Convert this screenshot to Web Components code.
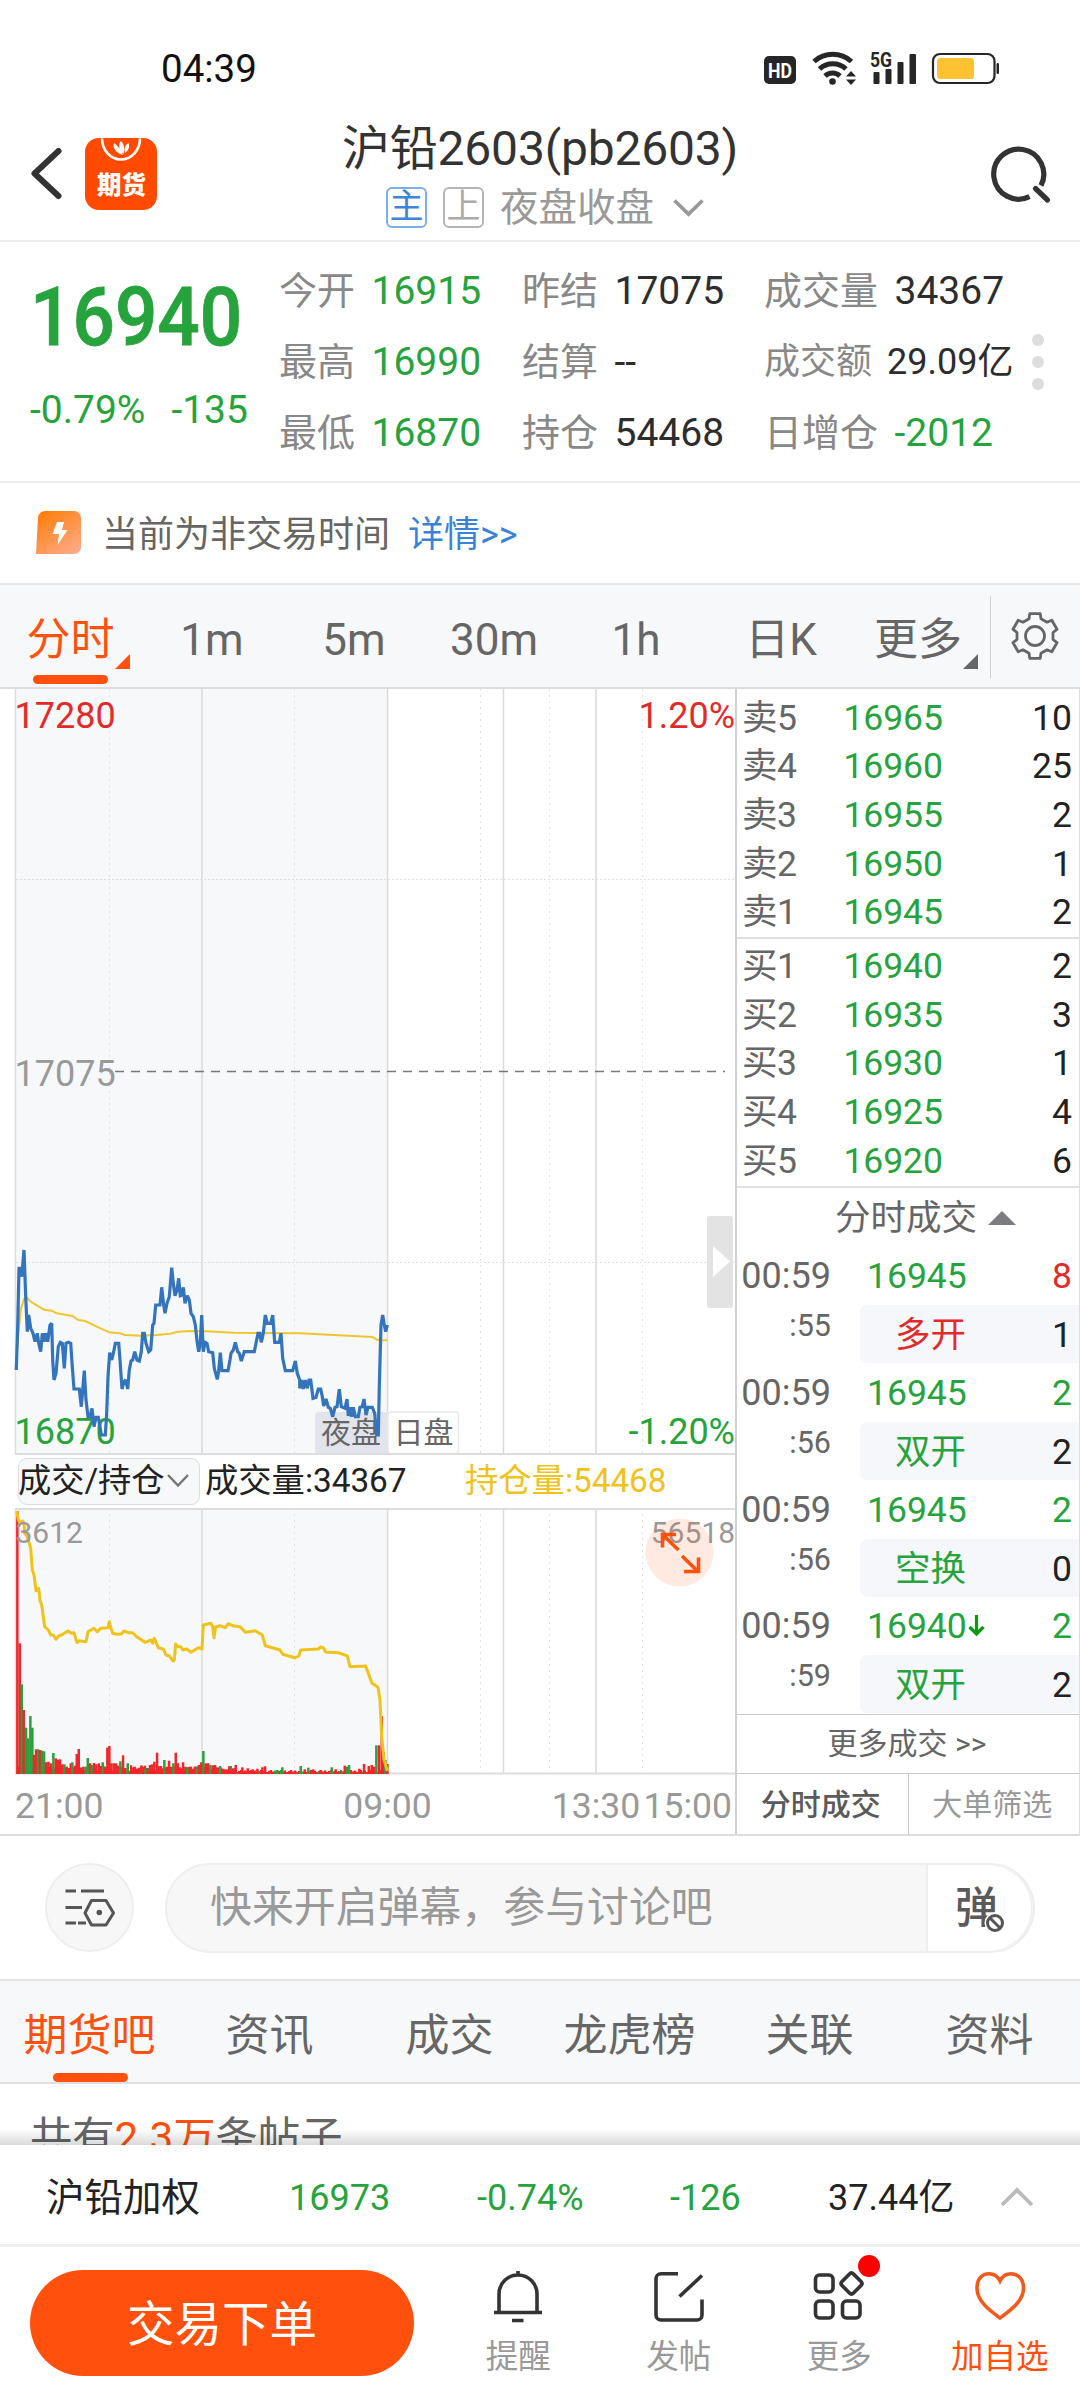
<!DOCTYPE html>
<html lang="zh-CN">
<head>
<meta charset="utf-8">
<title>沪铅2603</title>
<style>
html,body{margin:0;padding:0;background:#fff}
body{width:1080px;height:2400px;overflow:hidden;display:flex;flex-direction:column;
 font-family:Roboto,"Noto Sans CJK SC",sans-serif;color:#222;
 --green:#26a33c;--red:#e32a2a;--orange:#ff500d;--grey:#666;--line:#ddd;--panel:#f7f8fa}
</style>
</head>
<body>
<status-bar time="04:39"></status-bar>
<title-bar><span slot="title">沪铅2603(pb2603)</span><span slot="state">夜盘收盘</span></title-bar>
<quote-panel></quote-panel>
<trade-notice>当前为非交易时间<span slot="link">详情&gt;&gt;</span></trade-notice>
<period-tabs></period-tabs>
<market-view></market-view>
<danmu-bar>快来开启弹幕，参与讨论吧</danmu-bar>
<forum-tabs></forum-tabs>
<feed-head></feed-head>
<index-strip></index-strip>
<action-bar></action-bar>
<script>
const define = (name, html, after) => customElements.define(name, class extends HTMLElement {
  constructor() {
    super();
    const root = this.attachShadow({mode: 'open'});
    root.innerHTML = '<style>:host{display:block;box-sizing:border-box;flex:none}*{box-sizing:border-box}svg{display:block;flex:none}</style>' +
      (typeof html === 'function' ? html(this) : html);
    if (after) after(root, this);
  }
});

/* ---------- status bar ---------- */
define('status-bar', el => `
<style>
:host{height:108px;display:flex;padding:48px 0 0 161px;font-size:38.500px;line-height:42px;color:#111}
.t{flex:1}
svg{margin-top:-8px}
</style>
<span class="t">${el.getAttribute('time')}</span>
<svg width="330" height="60" viewBox="750 40 330 60" fill="#262626">
 <rect x="764" y="56" width="32" height="28" rx="5"/>
 <text x="780" y="77.500" font-size="21" font-weight="700" fill="#fff" text-anchor="middle" textLength="24" lengthAdjust="spacingAndGlyphs">HD</text>
 <g fill="none" stroke="#262626" stroke-width="5">
  <path d="M814 61.500a28 28 0 0 1 37.500 0"/>
  <path d="M819.500 69a19.500 19.500 0 0 1 26.500 0"/>
  <path d="M825 76a11 11 0 0 1 15 0"/>
 </g>
 <circle cx="832.500" cy="81.500" r="3.300"/>
 <path d="M851 71l5 5.600h-10zM851 85l5-5.600h-10z"/>
 <text x="870" y="67" font-size="20" font-weight="700" textLength="22" lengthAdjust="spacingAndGlyphs">5G</text>
 <rect x="873.500" y="72" width="6" height="12" rx="1"/>
 <rect x="885.500" y="69" width="6" height="15" rx="1"/>
 <rect x="897.500" y="62" width="6" height="22" rx="1"/>
 <rect x="909.500" y="54" width="6.500" height="30" rx="1"/>
 <rect x="933" y="54" width="61.500" height="29" rx="7" fill="none" stroke="#262626" stroke-width="2.200"/>
 <rect x="937" y="58" width="37" height="21" rx="3.500" fill="#ffc233"/>
 <rect x="996.500" y="63" width="2.500" height="11" rx="1.200"/>
</svg>`);

/* ---------- title bar ---------- */
define('title-bar', `
<style>
:host{height:134px;display:flex;align-items:center;border-bottom:2px solid #eee}
.l{width:250px;display:flex;align-items:center;padding-left:28px}
.mid{flex:1;display:flex;flex-direction:column;align-items:center;gap:10px}
.title{font-size:48px;line-height:56px;color:#333;letter-spacing:-.2px}
.sub{display:flex;align-items:center;height:41px;font-size:38.500px;line-height:41px;color:#999;padding-left:12px}
i{font-style:normal;width:41px;height:41px;border:2px solid #b5b5b5;border-radius:6px;font-size:34px;line-height:35px;text-align:center;color:#aaa;margin-right:16px}
i.b{border-color:#7caee8;color:#3d85d9}
.r{width:250px;display:flex;justify-content:flex-end;padding-right:27px}
</style>
<div class="l">
 <svg width="36" height="60" viewBox="28 144 36 60"><path d="M58.500 151L34.500 173.500L58.500 196" fill="none" stroke="#333" stroke-width="6" stroke-linecap="round" stroke-linejoin="round"/></svg>
 <svg width="93" height="72" viewBox="64 138 93 72"><rect x="85" y="138" width="72" height="72" rx="14" fill="#ff4a00"/>
  <path d="M102 138.500a19 21 0 0 0 38 0" fill="none" stroke="#fff" stroke-width="2.600"/>
  <path d="M123 155C116 153 112.500 148 114 143C118 146 121 150 123 155zM123.500 154C118.500 149 118 144.500 121 141C124.500 145 125 149 123.500 154zM125 153C124 148 125.500 144.500 128.500 143C130 147 128.500 150.500 125 153z" fill="#fff"/>
  <text x="121.500" y="194" font-size="25" font-weight="900" fill="#fff" text-anchor="middle" textLength="49" lengthAdjust="spacingAndGlyphs">期货</text></svg>
</div>
<div class="mid"><div class="title"><slot name="title"></slot></div>
 <div class="sub"><i class="b">主</i><i>上</i><slot name="state"></slot>
 <svg width="60" height="30" viewBox="0 0 60 30" style="margin-right:-8px"><path d="M20.500 8.500L34.500 22L48.500 8.500" fill="none" stroke="#999" stroke-width="3.800"/></svg></div></div>
<div class="r"><svg width="62" height="62" viewBox="990 143 62 62" fill="none" stroke="#333" stroke-width="5.200">
 <path d="M1028.500 196.700A25 25 0 1 1 1040 185.500"/><path d="M1034.500 188.500L1046.500 200" stroke-linecap="round"/></svg></div>`);

/* ---------- quote ---------- */
define('quote-panel', `
<style>
:host{height:241px;display:flex;border-bottom:2px solid #eee;font-size:39px}
.p{width:279px;padding:30px 0 0 30px;color:var(--green)}
.big{font-size:81px;line-height:92px;font-weight:500;width:226px;transform:scaleX(.922);transform-origin:0 50%;white-space:nowrap;-webkit-text-stroke:.8px currentColor}
.chg{display:flex;gap:26px;line-height:46px;margin-top:23px;white-space:nowrap}
.g{width:745px;display:grid;grid-template-columns:243px 242px 260px;grid-template-rows:repeat(3,71px);padding-top:13px}
.c{display:flex;align-items:center;line-height:46px;white-space:nowrap;color:#2d2d2d}
.c span{font-size:38px;color:#888;margin-right:16.500px}
.c.n{font-size:36px}.c.n span{font-size:36px;margin-right:15px}
em{font-style:normal;color:var(--green)}
.d{display:flex;flex-direction:column;gap:10px;padding:92px 0 0 8px}
.d b{width:12px;height:12px;border-radius:50%;background:#ddd}
</style>
<div class="p"><div class="big">16940</div><div class="chg"><span>-0.79%</span><span>-135</span></div></div>
<div class="g">
<div class="c"><span>今开</span><em>16915</em></div><div class="c"><span>昨结</span>17075</div><div class="c"><span>成交量</span>34367</div>
<div class="c"><span>最高</span><em>16990</em></div><div class="c"><span>结算</span>--</div><div class="c n"><span>成交额</span>29.09亿</div>
<div class="c"><span>最低</span><em>16870</em></div><div class="c"><span>持仓</span>54468</div><div class="c"><span>日增仓</span><em>-2012</em></div>
</div>
<div class="d"><b></b><b></b><b></b></div>`);

/* ---------- notice ---------- */
define('trade-notice', `
<style>
:host{height:100px;display:flex;align-items:center;font-size:36px;line-height:44px;color:#666;padding:4px 0 0 36px}
svg{margin:-5px 21px 0 0}
.a{color:#3a82d6;margin-left:18px}
</style>
<svg width="45" height="43" viewBox="0 0 45 43"><defs><linearGradient id="g" x1="0" y1="0" x2=".7" y2="1"><stop offset="0" stop-color="#ff7a00"/><stop offset="1" stop-color="#ffa880"/></linearGradient></defs>
<path d="M9 0H38a7 7 0 0 1 7 7V36a7 7 0 0 1-7 7H0L2 7a7 7 0 0 1 7-7z" fill="url(#g)"/><path d="M21 11h7l-2 8h5.500l-10 15 1.500-11h-6.500z" fill="#fff"/></svg>
<slot></slot><span class="a"><slot name="link"></slot></span>`);

/* ---------- period tabs ---------- */
define('period-tabs', `
<style>
:host{height:106px;display:flex;background:var(--panel);border-top:2px solid #eaeaea;border-bottom:2px solid #ddd;font-size:44px;line-height:50px;color:#666}
nav{width:990px;display:grid;grid-template-columns:141px 142px 142px 138px 146px 144px 1fr;height:102px}
nav>div{display:flex;align-items:center;justify-content:center;padding-top:7px;position:relative}
nav>div:last-child{justify-content:flex-start;padding-left:21px}
.on{color:var(--orange)}
.on:after{content:"";position:absolute;left:33px;top:90px;width:75px;height:9px;border-radius:5px;background:var(--orange)}
.on svg,.m svg{position:absolute;bottom:18px}
.s{flex:1;display:flex;align-items:center;justify-content:center;padding-right:2px}
.v{width:1px;height:82px;background:#d2d2d2;margin-top:11px}
</style>
<nav><div class="on">分时<svg style="right:11px" width="15" height="15"><path d="M15 0V15H0z" fill="#ff500d"/></svg></div>
<div>1m</div><div>5m</div><div>30m</div><div>1h</div><div>日K</div>
<div class="m">更多<svg style="right:12px" width="15" height="15"><path d="M15 0V15H0z" fill="#666"/></svg></div></nav><div class="v"></div>
<div class="s"><svg width="50" height="52" viewBox="-25 -26 50 52" fill="none" stroke="#666" stroke-width="2.800" stroke-linejoin="round">
<circle r="9.500"/><path id="gear"/></svg></div>`, root => {
  const pts = [];
  for (let k = 0; k < 6; k++) for (const [a, r] of [[-13, 23], [13, 23], [19, 18.3], [41, 18.3]]) {
    const t = (k * 60 - 90 + a) * Math.PI / 180;
    pts.push((r * Math.cos(t)).toFixed(1) + ' ' + (r * Math.sin(t)).toFixed(1));
  }
  root.getElementById('gear').setAttribute('d', 'M' + pts.join('L') + 'z');
});

/* ---------- chart ---------- */
const series = (text, ox, oy) => text.trim().split(/\s+/).map(p => {
  const [x, y] = p.split(',');
  return (ox + x / 3).toFixed(1) + ',' + (oy + y / 3).toFixed(1);
}).join(' ');
const price = series(`49,510 53,380 57,205 62,205 65,230 72,150 77,290 82,395 86,345 92,385 99,400 105,425 112,400 116,430 122,455 127,400 132,425 137,400 143,425 150,375 155,370 158,480 162,540 168,520 175,440 181,427 187,430 193,505 198,430 205,427 212,430 217,500 222,567 238,567 244,620 248,570 253,512 258,600 264,650 270,650 276,625 282,680 288,652 295,652 300,680 304,705 316,705 320,640 324,530 329,458 335,480 341,455 346,430 356,430 360,480 366,567 372,545 377,540 383,567 388,510 393,483 398,480 404,455 411,480 418,483 424,455 428,400 433,400 438,430 446,455 452,450 458,375 462,370 467,315 480,315 485,262 491,315 495,340 501,310 508,290 515,203 520,250 525,287 531,270 536,235 541,287 546,285 550,262 555,310 562,287 568,300 573,340 580,350 586,375 592,430 596,455 601,430 605,345 610,455 615,427 621,430 626,455 638,458 643,505 652,538 656,512 661,458 666,512 684,512 690,480 693,460 700,450 706,427 713,455 718,460 724,483 733,455 763,455 768,430 774,400 779,400 784,427 790,400 796,345 802,370 812,370 818,345 824,427 838,427 843,400 848,475 856,512 878,512 886,483 892,520 899,540 899,565 905,540 910,567 916,540 922,565 927,540 932,540 939,595 948,592 955,567 962,567 967,590 971,618 978,597 985,622 991,625 998,650 1005,622 1011,620 1018,568 1024,620 1035,625 1041,597 1045,648 1050,622 1055,650 1060,622 1066,650 1075,650 1080,622 1087,620 1092,597 1098,645 1104,622 1117,622 1124,640 1130,705 1135,705 1138,560 1143,375 1148,345 1152,370 1157,395 1162,375`, 0, 1200);
const average = series(`49,480 55,400 63,325 73,296 80,292 90,303 110,316 132,329 155,332 170,340 218,348 235,360 255,363 290,380 328,397 360,400 375,405 420,407 470,405 510,401 530,396 565,393 620,394 700,398 760,399 900,400 1000,405 1060,408 1118,411 1130,419 1145,421 1162,421`, 0, 1200);
const interest = series(`20,33 25,60 30,68 38,63 42,70 44,100 50,105 55,120 62,145 67,210 72,225 78,272 86,265 90,300 96,320 104,380 115,390 122,405 130,405 138,418 146,408 158,403 174,393 184,400 192,398 201,428 208,422 228,425 234,395 252,385 262,395 272,385 294,383 298,365 303,385 308,400 320,403 334,402 342,393 355,398 368,398 380,410 405,427 423,420 428,430 433,415 445,443 460,447 468,465 478,468 489,483 493,480 497,432 503,440 512,440 518,450 530,447 543,457 565,443 576,447 580,375 603,370 608,380 612,413 617,380 630,377 645,383 655,371 668,377 690,380 706,397 735,392 757,405 766,437 810,450 818,463 855,473 866,468 872,450 925,447 932,441 940,443 947,456 985,458 1012,468 1020,500 1067,498 1075,520 1086,550 1104,562 1110,600 1115,710 1122,780 1132,812`, 10, 1500);
const spikes = `22,33,r 29,430,r 35,553,g 41,630,r 48,683,g 54,715,g 61,648,g 67,683,g 72,765,r 78,748,r 84,748,g 90,750,r 96,752,g 102,754,g 108,787,r 115,785,r 122,790,r 130,759,g 137,775,r 143,779,r 150,778,r 157,793,r 163,793,g 170,800,r 176,804,r 182,790,r 187,787,g 193,802,r 200,762,r 206,747,r 213,803,r 220,800,r 227,800,g 233,774,g 240,790,r 246,795,g 252,789,r 259,793,r 266,790,r 272,798,r 278,787,g 285,802,r 292,743,r 298,738,r 304,790,r 311,790,r 318,790,r 325,797,r 331,784,g 339,766,r 346,804,r 353,790,g 360,812,r 367,810,r 373,800,r 380,806,r 387,803,r 394,796,r 400,800,r 406,806,g 413,812,r 420,795,r 426,793,r 433,785,r 441,758,r 447,800,r 454,806,r 463,780,g 470,800,r 477,782,r 484,800,r 490,790,g 497,758,r 503,790,r 510,802,r 519,787,r 526,800,r 532,803,g 540,800,r 547,806,r 554,800,r 560,799,g 567,795,r 574,787,r 580,753,g 587,790,r 594,790,r 601,795,g 608,796,r 615,795,r 622,802,r 630,798,g 640,806,r 650,808,r 662,810,r 677,795,r 697,802,r 706,812,r 713,805,r 728,808,r 742,806,r 757,802,r 765,799,r 780,812,r 802,810,g 817,802,g 840,813,r 856,814,r 872,798,g 884,808,r 895,803,g 909,808,r 930,811,r 945,812,r 965,802,g 977,808,r 1004,797,r 1011,800,g 1017,795,g 1035,813,r 1048,806,r 1062,792,r 1076,798,r 1085,795,r 1092,800,r 1099,736,g 1107,736,r 1115,649,r 1120,755,r 1126,780,g 1132,792,r`;
const bars = () => {
  let s = '';
  for (let i = 0; i < 186; i++) {
    const h = 2 + (i * 37 % 5) * .5 + (i < 110 ? (i * 13 % 7) * .8 : 0);
    s += `<rect x="${(16 + i * 2).toFixed(1)}" y="${1774 - h}" width="2.100" height="${h}" fill="${i * 29 % 11 < 2 ? '#2ba03c' : '#f2262a'}"/>`;
  }
  spikes.split(' ').forEach(p => {
    const [x, y, c] = p.split(',');
    s += `<rect x="${(10 + x / 3 - 1.2).toFixed(1)}" y="${(1500 + y / 3).toFixed(1)}" width="2.500" height="${(274 - y / 3).toFixed(1)}" fill="${c === 'g' ? '#2ba03c' : '#f2262a'}"/>`;
  });
  return s;
};
const vline = (x, y1, y2, dot) => dot
  ? `<path d="M${x} ${y1}V${y2}" stroke="#e2e2e2" stroke-width="1" stroke-dasharray="2 4"/>`
  : `<path d="M${x} ${y1}V${y2}" stroke="#dadada" stroke-width="1.500"/>`;
const grid = (y1, y2) => [202, 387.5, 503.5, 596].map(x => vline(x, y1, y2)).join('') +
  [109.5, 294.5, 480.5, 549.5, 642.5].map(x => vline(x, y1, y2, 1)).join('');

define('price-chart', `
<style>:host{width:735px;height:766px}text{font-size:36px}</style>
<svg width="735" height="766" viewBox="0 689 735 766">
<rect x="15.500" y="689" width="372" height="765" fill="#f7f8fa"/>
<path d="M15.500 689V1454" stroke="#ddd" stroke-width="1.500"/>
${grid(689, 1454)}
<path d="M16 879.500H735M16 1262.500H735" stroke="#dedede" stroke-dasharray="2 2"/>
<path d="M115 1071.500H725" stroke="#777" stroke-width="1.400" stroke-dasharray="9 7"/>
<rect x="315" y="1412" width="73" height="42" rx="4" fill="#e1e4eb"/>
<rect x="388" y="1412" width="70.500" height="41.500" rx="3" fill="#fff" stroke="#e8e8ea" stroke-width="1.500"/>
<text x="321" y="1443" fill="#666" style="font-size:30px">夜盘</text><text x="393.500" y="1443" fill="#666" style="font-size:30px">日盘</text>
<path d="M15 1454H735" stroke="#ddd" stroke-width="2"/>
<polyline points="${average}" fill="none" stroke="#efc62f" stroke-width="2" stroke-linejoin="round"/>
<text x="14.500" y="1444" fill="#26a33c">16870</text>
<polyline points="${price}" fill="none" stroke="#3374bd" stroke-width="3.200" stroke-linejoin="miter" stroke-miterlimit="2"/>
<text x="14.500" y="728" fill="#e32a2a">17280</text><text x="735" y="728" fill="#e32a2a" text-anchor="end">1.20%</text>
<text x="14.500" y="1085.500" fill="#999">17075</text>
<text x="735" y="1444" fill="#26a33c" text-anchor="end">-1.20%</text>
<rect x="707" y="1216" width="26" height="92" rx="2" fill="#e3e3e3"/><path d="M713 1246L730 1261.500L713 1277z" fill="#fff"/>
</svg>`);

define('chart-legend', `
<style>
:host{height:53px;display:flex;align-items:center;font-size:33.300px;line-height:40px;color:#222;padding:0 0 1px 18px;white-space:nowrap}
.p{height:47px;width:182px;background:#f7f8fa;border:1.500px solid #dcdde0;border-radius:9px;display:flex;align-items:center;letter-spacing:-.1px}
.p span{margin-left:-1px}
.v{width:265px;padding-left:5px}.o{color:#efc21c;padding-left:0}
</style>
<div class="p"><span>成交/持仓</span><svg width="26" height="16" viewBox="0 0 26 16" style="margin-left:1px"><path d="M3 2L13 12.500L23 2" fill="none" stroke="#777" stroke-width="2.500"/></svg></div>
<div class="v">成交量:34367</div><div class="o">持仓量:54468</div>`);

define('volume-chart', `
<style>:host{width:735px;height:327px}text{font-family:Roboto,sans-serif}</style>
<svg width="735" height="327" viewBox="0 1508 735 327">
<rect x="15.500" y="1508" width="372" height="266" fill="#f7f8fa"/>
<path d="M15 1509H735M15 1773.500H735" stroke="#ddd" stroke-width="2"/>
<path d="M15.500 1508V1773" stroke="#ddd" stroke-width="1.500"/>
${grid(1508, 1773)}
${bars()}
<polyline points="${interest}" fill="none" stroke="#f0c31b" stroke-width="3" stroke-linejoin="round"/>
<g fill="#999" font-size="30"><text x="15.500" y="1543">3612</text><text x="735" y="1543" text-anchor="end">56518</text></g>
<circle cx="679.500" cy="1552.500" r="34" fill="#ff500d" fill-opacity=".12"/>
<path d="M678.500 1550L663 1535M662.500 1547.500V1534.500H676M682 1556L698 1571.500M698.500 1557.500V1571.500H684" fill="none" stroke="#ff500d" stroke-width="3.600"/>
<g fill="#999" font-size="35.500"><text x="15" y="1818">21:00</text><text x="387.500" y="1818" text-anchor="middle">09:00</text><text x="596" y="1818" text-anchor="middle">13:30</text><text x="732" y="1818" text-anchor="end">15:00</text></g>
</svg>`);

/* ---------- order book ---------- */
define('order-book', () => {
  const row = (n, p, q) => `<div class="r"><span>${n}</span><b>${p}</b><em>${q}</em></div>`;
  return `
<style>
:host{font-size:35.500px;line-height:48px;height:499px}
.s{height:250px;border-bottom:2px solid #e0e0e0;padding:4.200px 0 0}
.b{height:249px;padding-top:2.700px}
.r{height:48.700px;display:flex;align-items:center;padding:0 7px 0 5px}
span{width:101.500px;color:#666;font-size:35.500px;letter-spacing:-.6px}
b{font-weight:400;color:var(--green);flex:1;letter-spacing:-.1px}
em{font-style:normal;color:#222}
</style>
<div class="s">${row('卖5',16965,10)+row('卖4',16960,25)+row('卖3',16955,2)+row('卖2',16950,1)+row('卖1',16945,2)}</div>
<div class="s b">${row('买1',16940,2)+row('买2',16935,3)+row('买3',16930,1)+row('买4',16925,4)+row('买5',16920,6)}</div>`;
});

/* ---------- trade ticks ---------- */
define('tick-list', () => {
  const t = (s, p, q, k, d, c) => `<div class="t"><div class="l"><div>00:59</div><small>:${s}</small></div>
  <div class="k"><div class="p"><span class="g">${p}</span>${p === 16940 ? '<svg width="18" height="24" viewBox="0 0 18 24"><path d="M9.500 1V20M2.500 13L9.500 20L16.500 13" fill="none" stroke="#0a9a14" stroke-width="3.200"/></svg>' : ''}<b class="${c}">${q}</b></div>
  <div class="q"><span class="${c}">${k}</span><b>${d}</b></div></div></div>`;
  return `
<style>
:host{height:526px;font-size:35.500px;color:#666;overflow:hidden}
.h{height:59px;display:flex;align-items:center;gap:11px;line-height:50px;padding:1px 0 0 98px}
.t{height:116.800px;display:flex}
.l{width:94px;text-align:right;line-height:58px;font-size:36px}
small{display:block;font-size:30.500px;line-height:42px}
.k{flex:1;padding-left:29px}
.p{height:58px;display:flex;align-items:center;padding:0 7px 0 7px}
.q{height:58px;display:flex;align-items:center;background:#f6f7fa;border-radius:7px 0 0 7px;padding:2px 7px 0 35px;line-height:50px}
b{font-weight:400;color:#222;margin-left:auto}
.g{color:var(--green)}.x{color:var(--red)}
</style>
<div class="h">分时成交<svg width="28" height="14"><path d="M0 14L14 0L28 14z" fill="#7c7c80"/></svg></div>
${t(55,16945,8,'多开',1,'x')+t(56,16945,2,'双开',2,'g')+t(56,16945,2,'空换',0,'g')+t(59,16940,2,'双开',2,'g')}`;
});

define('tick-footer', `
<style>
:host{height:121px;font-size:30px;line-height:40px;color:#666;border-top:1.500px solid #ccc}
.m{height:58px;display:flex;align-items:center;justify-content:center;padding-right:2px}
.f{height:62px;border-top:1.500px solid #ccc;display:flex}
.f div{flex:1;display:flex;align-items:center;justify-content:center;padding:1px 3px 0 0;font-weight:500;color:#5a5a5a}
.f div+div{border-left:1.500px solid #ccc;color:#999;font-weight:400}
</style>
<div class="m">更多成交 &gt;&gt;</div><div class="f"><div>分时成交</div><div>大单筛选</div></div>`);

define('market-view', `
<style>
:host{height:1147px;display:flex;border-bottom:2px solid #ddd}
.l{width:735px;display:flex;flex-direction:column}
.r{width:345px;border-left:2px solid #d0d0d0;border-right:1.500px solid #ddd;display:flex;flex-direction:column}
</style>
<div class="l"><price-chart></price-chart><chart-legend></chart-legend><volume-chart></volume-chart></div>
<div class="r"><order-book></order-book><tick-list></tick-list><tick-footer></tick-footer></div>`);

/* ---------- danmu ---------- */
define('danmu-bar', `
<style>
:host{height:143px;display:flex;align-items:center;padding:0 45px 0;gap:31px}
.c{width:89px;height:89px;border-radius:50%;border:2px solid #eee;background:#f7f7f7;display:flex;align-items:center;justify-content:center}
.i{flex:1;height:90px;border:2px solid #eee;border-radius:45px;background:#f7f7f7;display:flex;align-items:center;overflow:hidden;font-size:41.900px;line-height:50px;color:#999;padding-left:43px;white-space:nowrap}
.w{width:107px;height:100%;background:#fff;border-left:2px solid #eee;margin-left:auto;position:relative;padding:18px 0 0 27px;font-size:43px;font-weight:500;line-height:50px;color:#5a5a5a;border-radius:0 44px 44px 0;box-shadow:inset -2px 0 0 #eee}
.w svg{position:absolute;left:56px;top:47px}
</style>
<div class="c"><svg width="52" height="42" viewBox="0 0 52 42" fill="none" stroke="#555" stroke-width="3"><path d="M1.500 4H12M17 4H40M1.500 20.500H18M1.500 36H12M14 36H22"/><path d="M27.500 13.500H42L49.500 26L42 38H27.500L21 26z" stroke-linejoin="round"/><circle cx="35.300" cy="25.500" r="2.800" fill="#555" stroke="none"/></svg></div>
<div class="i"><slot></slot><div class="w">弹<svg width="22" height="22" viewBox="0 0 22 22"><circle cx="11" cy="11" r="10.500" fill="#fff"/><circle cx="11" cy="11" r="7.500" fill="none" stroke="#555" stroke-width="3"/><path d="M6 6L16 16" stroke="#555" stroke-width="3"/></svg></div></div>`);

/* ---------- forum tabs ---------- */
define('forum-tabs', `
<style>
:host{height:105px;background:var(--panel);border-top:2px solid #e2e2e2;border-bottom:2px solid #e0e0e0;display:flex;font-size:44px;line-height:50px;color:#666}
div{flex:1;display:flex;align-items:center;justify-content:center;padding:9px 1px 0 0;position:relative}
.on{color:var(--orange)}
.on:after{content:"";position:absolute;left:53px;top:92px;width:75px;height:9px;border-radius:5px;background:var(--orange)}
</style>
<div class="on">期货吧</div><div>资讯</div><div>成交</div><div>龙虎榜</div><div>关联</div><div>资料</div>`);

define('feed-head', `
<style>
:host{height:61px;overflow:hidden;font-size:42.300px;line-height:50px;color:#666;padding:29px 0 0 30px;position:relative;white-space:nowrap}
em{font-style:normal;color:var(--orange)}
.sh{position:absolute;left:0;right:0;bottom:0;height:16px;background:linear-gradient(rgba(0,0,0,0),rgba(0,0,0,.15))}
</style>
共有<em>2.3万</em>条帖子<div class="sh"></div>`);

/* ---------- index strip ---------- */
define('index-strip', `
<style>
:host{height:102px;border-bottom:3px solid #eee;display:grid;grid-template-columns:243px 188px 193px 158px 219px 1fr;align-items:center;padding:6px 0 0 46px;font-size:36px;line-height:46px;color:#222;white-space:nowrap}
b{font-weight:400;font-size:38.500px}.g{color:var(--green)}
svg{margin:0 0 2px -48px}
</style>
<b>沪铅加权</b><span class="g">16973</span><span class="g">-0.74%</span><span class="g">-126</span><span>37.44亿</span>
<svg width="36" height="22" viewBox="0 0 36 22"><path d="M3 19L18 4L33 19" fill="none" stroke="#bbb" stroke-width="3.800"/></svg>`);

/* ---------- bottom actions ---------- */
define('action-item', `
<style>
:host{width:160.500px;display:flex;flex-direction:column;align-items:center;font-size:32.500px;line-height:40px;color:var(--c,#999)}
div{height:52px;margin-bottom:15px}
</style>
<div><slot name="icon"></slot></div><slot></slot>`);

define('action-bar', `
<style>
:host{flex:1;display:flex;padding:23px 0 0 30px;position:relative}
.buy{width:384px;height:106px;border-radius:53px;background:var(--orange);color:#fff;font-size:47.500px;line-height:111px;text-align:center;margin-right:24px}
.hot{--c:#ff500d}
.dot{position:absolute;left:858px;top:8px;width:22px;height:22px;border-radius:50%;background:#f00}
svg{fill:none;stroke:#333;stroke-width:3.600}
action-item{height:120px}
</style>
<div class="buy">交易下单</div>
<action-item><svg slot="icon" width="52" height="54" viewBox="492 2270 52 54"><path d="M518 2271V2276M499 2312V2294a19 19 0 0 1 38 0V2312M494 2312.500H542M512 2320.500H523.500" /></svg>提醒</action-item>
<action-item><svg slot="icon" width="54" height="54" viewBox="652 2270 54 54"><path d="M678 2273.800H661a5 5 0 0 0-5 5V2315a5 5 0 0 0 5 5H697a5 5 0 0 0 5-5V2299.500M679.500 2296.500L702 2275.500"/></svg>发帖</action-item>
<action-item><svg slot="icon" width="54" height="54" viewBox="812 2270 54 54"><rect x="815.500" y="2275" width="17.500" height="17" rx="4"/><rect x="815.500" y="2301" width="17.500" height="17" rx="4"/><rect x="842.500" y="2301" width="17.500" height="17" rx="4"/><path d="M849.500 2274Q851.500 2271.800 853.500 2274L861 2281.500Q863 2283.500 861 2285.500L853.500 2293Q851.500 2295 849.500 2293L842 2285.500Q840 2283.500 842 2281.500Z"/></svg>更多</action-item>
<action-item class="hot"><svg slot="icon" width="54" height="54" viewBox="972 2270 54 54" style="stroke:#f25a1c"><path d="M999 2318C988 2310 976 2301 976 2288C976 2279 981 2273.800 988 2273.800C993.500 2273.800 997 2277 999 2281C1001 2277 1004.500 2273.800 1010 2273.800C1017 2273.800 1022.500 2279 1022.500 2288C1022.500 2301 1010 2310 999 2318Z"/></svg>加自选</action-item>
<i class="dot"></i>`);
</script>
</body>
</html>
